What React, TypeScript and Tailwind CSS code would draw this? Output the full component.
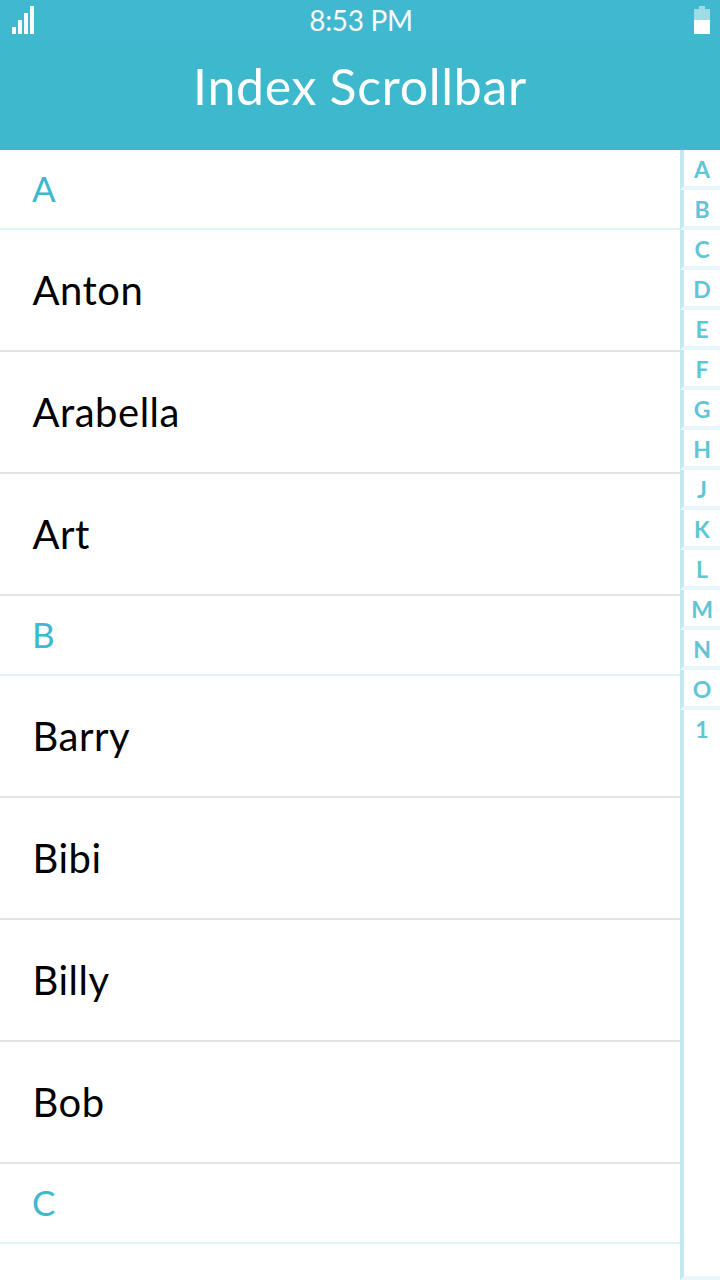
const sections = [
  { letter: "A", names: ["Anton", "Arabella", "Art"] },
  { letter: "B", names: ["Barry", "Bibi", "Billy", "Bob"] },
  { letter: "C", names: [] },
];

const indexLetters = ["A", "B", "C", "D", "E", "F", "G", "H", "J", "K", "L", "M", "N", "O", "1"];

function SignalIcon() {
  return (
    <svg className="h-7 w-[22px]" viewBox="0 0 22 28" fill="#fafafa" shapeRendering="crispEdges">
      <rect x="0" y="21" width="4" height="7" />
      <rect x="6" y="14" width="4" height="14" />
      <rect x="12" y="7" width="4" height="21" />
      <rect x="18" y="0" width="4" height="28" />
    </svg>
  );
}

function BatteryIcon() {
  return (
    <svg className="h-7 w-4" viewBox="0 0 16 28" shapeRendering="crispEdges">
      <path d="M5 0h6v3h5v11H0V3h5z" fill="#9fdce6" />
      <rect x="0" y="14" width="16" height="14" fill="#fff" />
    </svg>
  );
}

export default function App() {
  return (
    <div className="flex h-[1280px] w-[720px] flex-col overflow-hidden bg-white font-['Lato',sans-serif]">
      <header className="flex h-[150px] shrink-0 flex-col bg-[#3db8cc] text-[#fafafa]">
        <div className="grid h-10 grid-cols-3 items-center bg-[#40b8d0] pl-3 pr-[10px]">
          <SignalIcon />
          <span className="text-center text-[28px] leading-[39px] tracking-[-0.3px]">8:53 PM</span>
          <div className="flex justify-end">
            <BatteryIcon />
          </div>
        </div>
        <h1 className="text-center text-[50px] leading-[92px] tracking-[0.7px] [word-spacing:-1px] text-white">Index Scrollbar</h1>
      </header>
      <main className="flex min-h-0 flex-1">
        <ul className="flex-1 overflow-hidden">
          {sections.map((section) => (
            <li key={section.letter}>
              <h2 className="h-20 border-b-2 border-[#e1f5f9] pl-8 text-[35px] leading-[76px] text-[#3db8cc]">
                {section.letter}
              </h2>
              {section.names.map((name) => (
                <p
                  key={name}
                  className="h-[122px] border-b-2 border-[#e4e4e4] pl-[32.5px] text-[40px] leading-[120px] tracking-[0.5px] text-black"
                >
                  {name}
                </p>
              ))}
            </li>
          ))}
        </ul>
        <nav className="flex w-10 flex-col">
          {indexLetters.map((letter) => (
            <span
              key={letter}
              className="h-10 border-b-4 border-l-4 border-b-[#e9f6fa] border-l-[#c2e9ef] text-center text-[23px] font-bold leading-[39px] text-[#60c5d5] last:h-auto last:flex-1"
            >
              {letter}
            </span>
          ))}
        </nav>
      </main>
    </div>
  );
}
